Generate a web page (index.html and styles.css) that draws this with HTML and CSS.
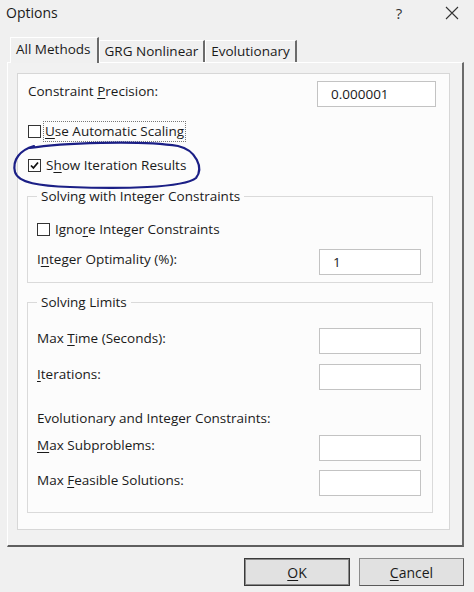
FILE: index.html
```html
<!DOCTYPE html>
<html>
<head>
<meta charset="utf-8">
<title>Options</title>
<link rel="stylesheet" href="styles.css">
</head>
<body>
<div class="dialog">
  <div class="titlebar">
    <span class="title">Options</span>
    <span class="tb-help">?</span>
    <span class="tb-close">
      <svg width="14" height="14" viewBox="0 0 14 14"><path d="M1 1 L13 13 M13 1 L1 13" stroke="#333" stroke-width="1.1" fill="none"/></svg>
    </span>
  </div>

  <div class="tabs">
    <div class="tab active">All Methods</div>
    <div class="tab">GRG Nonlinear</div>
    <div class="tab">Evolutionary</div>
  </div>

  <div class="panel">
    <div class="page">
      <div class="row r-precision">
        <span class="rlabel">Constraint <u>P</u>recision:</span>
        <div class="field wide">0.000001</div>
      </div>

      <div class="check c-scaling">
        <span class="box"></span>
        <span class="label focus"><u>U</u>se Automatic Scaling</span>
      </div>

      <div class="check c-show">
        <span class="box"><svg width="11" height="11" viewBox="0 0 11 11"><path d="M2 5.5 L4.4 8 L9 2.5" stroke="#111" stroke-width="1.8" fill="none"/></svg></span>
        <span class="label">S<u>h</u>ow Iteration Results</span>
      </div>

      <fieldset class="group g-int">
        <legend>Solving with Integer Constraints</legend>
        <div class="check c-ignore">
          <span class="box"></span>
          <span class="label">Igno<u>r</u>e Integer Constraints</span>
        </div>
        <div class="row r-opt">
          <span class="rlabel">I<u>n</u>teger Optimality (%):</span>
          <div class="field">1</div>
        </div>
      </fieldset>

      <fieldset class="group g-limits">
        <legend>Solving Limits</legend>
        <div class="row r-time">
          <span class="rlabel">Max <u>T</u>ime (Seconds):</span>
          <div class="field"></div>
        </div>
        <div class="row r-iter">
          <span class="rlabel"><u>I</u>terations:</span>
          <div class="field"></div>
        </div>
        <div class="subhead">Evolutionary and Integer Constraints:</div>
        <div class="row r-sub">
          <span class="rlabel"><u>M</u>ax Subproblems:</span>
          <div class="field"></div>
        </div>
        <div class="row r-feas">
          <span class="rlabel">Max <u>F</u>easible Solutions:</span>
          <div class="field"></div>
        </div>
      </fieldset>
    </div>
  </div>

  <div class="buttons">
    <button class="btn btn-default"><u>O</u>K</button>
    <button class="btn"><u>C</u>ancel</button>
  </div>
</div>

<svg class="annotation" width="474" height="592" viewBox="0 0 474 592">
  <path d="M30 148 C 60 143, 140 140, 178 146 C 196 150, 204 168, 196 178 C 184 188, 120 189, 70 187 C 40 186, 18 183, 15 172 C 12 160, 20 150, 34 146"
        stroke="#1b1f86" stroke-width="2.2" fill="none" stroke-linecap="round"/>
</svg>
</body>
</html>
```

FILE: styles.css
```css
* { box-sizing: border-box; }

html, body {
  margin: 0;
  padding: 0;
}

body {
  width: 474px;
  height: 592px;
  background: #f0f0f0;
  font-family: "Open Sans", "Noto Sans", "Liberation Sans", sans-serif;
  font-size: 13.5px;
  color: #1a1a1a;
  position: relative;
  overflow: hidden;
}

u { text-decoration: underline; text-underline-offset: 2px; }

.dialog {
  display: flex;
  flex-direction: column;
}

/* title bar */
.titlebar {
  height: 25px;
  display: flex;
  align-items: center;
  padding-left: 6px;
}
.title {
  font-size: 14px;
  flex: 1;
}
.tb-help {
  width: 16px;
  text-align: center;
  font-size: 15px;
  color: #333;
  margin-right: 38px;
}
.tb-close {
  width: 14px;
  height: 14px;
  margin-right: 15px;
  display: flex;
}

/* tabs */
.tabs {
  display: flex;
  align-items: flex-end;
  margin-top: 12px;
  padding-left: 10px;
  height: 25px;
  position: relative;
  z-index: 2;
}
.tab {
  height: 22px;
  line-height: 21px;
  padding: 0 5px 0 5px;
  border-top: 1px solid #ffffff;
  border-left: 1px solid #ffffff;
  border-right: 2px solid #6b6b6b;
  background: #f0f0f0;
  white-space: nowrap;
}
.tab.active {
  height: 26px;
  line-height: 23px;
  padding: 0 6px 0 5px;
  margin-bottom: -1px;
}

/* panel */
.panel {
  margin-left: 7px;
  width: 457px;
  padding: 10px 12px 15px 9px;
  border-top: 1px solid #ffffff;
  border-left: 1px solid #ffffff;
  border-right: 2px solid #6b6b6b;
  border-bottom: 2px solid #5f5f5f;
  background: #f1f1f1;
}
.page {
  background: #fcfcfc;
  border: 1px solid #d7d7d7;
  padding: 7px 13px 16px 10px;
}

.row {
  display: flex;
  align-items: center;
  justify-content: space-between;
  height: 26px;
}
.rlabel {
  padding-bottom: 7px;
}
.field {
  width: 102px;
  height: 26px;
  border: 1px solid #c3c3c3;
  background: #ffffff;
  padding-left: 13px;
  line-height: 24px;
}
.field.wide {
  width: 119px;
}

.check {
  display: flex;
  align-items: center;
  height: 21px;
}
.box {
  width: 13px;
  height: 13px;
  border: 1px solid #333;
  background: #fff;
  display: flex;
  align-items: center;
  justify-content: center;
  flex: none;
}
.label {
  margin-left: 3px;
  line-height: 19px;
  padding: 0 1px;
  border: 1px solid transparent;
}
.label.focus {
  border: 1px dotted #777;
  margin-left: 2px;
}
.c-scaling { margin-top: 14px; }
.c-show { margin-top: 13px; }

/* groups */
.group {
  margin: 10px 3px 0 -1px;
  padding: 13px 11px 7px 9px;
  border: 1px solid #dadada;
  min-inline-size: 0;
}
.group legend {
  padding: 0 4px;
  line-height: 20px;
  height: 20px;
}
.g-limits {
  margin-top: 9px;
  padding-top: 16px;
  padding-bottom: 16px;
}

.r-opt { margin-top: 9px; }
.r-iter { margin-top: 10px; }
.subhead {
  margin-top: 18px;
  height: 20px;
  line-height: 20px;
}
.r-sub { margin-top: 7px; }
.r-feas { margin-top: 9px; }

/* buttons */
.buttons {
  display: flex;
  justify-content: flex-end;
  gap: 9px;
  padding-right: 10px;
  margin-top: 11px;
}
.btn {
  width: 105px;
  height: 28px;
  background: #e1e1e1;
  border: 1px solid #8c8c8c;
  border-right-color: #5a5a5a;
  border-bottom-color: #5a5a5a;
  font-family: inherit;
  font-size: 14px;
  color: #1a1a1a;
  padding: 0;
}
.btn-default {
  width: 106px;
  border: 1px solid #3a3a3a;
  box-shadow: inset 0 0 0 1px #8a8a8a;
}

.annotation {
  position: absolute;
  left: 0;
  top: 0;
  pointer-events: none;
  z-index: 5;
}
```
